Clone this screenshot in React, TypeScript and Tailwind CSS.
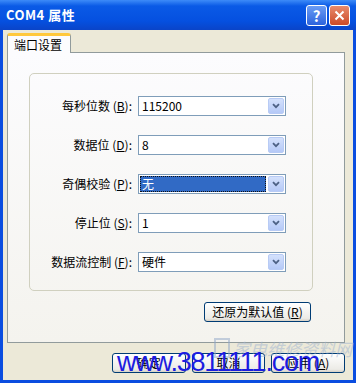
import React from "react";

const font = { fontFamily: '"Noto Sans CJK SC", "DejaVu Sans", sans-serif' };

// chevron do combo estilo XP
function Chevron() {
  return (
    <svg width="8" height="6" viewBox="0 0 8 6">
      <path d="M1 1.2 L4 4.2 L7 1.2" fill="none" stroke="#4d6185" strokeWidth="1.8" />
    </svg>
  );
}

function Combo({ value, selected }: { value: string; selected?: boolean }) {
  return (
    <div className="w-[148px] h-[20px] border border-[#7f9db9] bg-white flex items-center p-[1px]">
      <div className="flex-1 h-full flex items-center pr-[2px]">
        {selected ? (
          <div className="w-full h-full bg-[#316ac5] text-white border border-dotted border-[#111] flex items-center pl-[1px] text-[12px] leading-none">
            {value}
          </div>
        ) : (
          <span className="pl-[2px] text-[12px] leading-none text-black">{value}</span>
        )}
      </div>
      <div className="w-[16px] h-[16px] rounded-[2px] border border-[#b8cbf5] bg-[linear-gradient(to_bottom,#d4e1fc,#b5c9f7)] flex items-center justify-center">
        <Chevron />
      </div>
    </div>
  );
}

function Label({ text, k }: { text: string; k: string }) {
  return (
    <div className="w-[102px] text-right text-[12px] leading-none text-black whitespace-nowrap">
      {text} (<span className="underline">{k}</span>):
    </div>
  );
}

const rows = [
  { label: "每秒位数", k: "B", value: "115200" },
  { label: "数据位", k: "D", value: "8" },
  { label: "奇偶校验", k: "P", value: "无", selected: true },
  { label: "停止位", k: "S", value: "1" },
  { label: "数据流控制", k: "F", value: "硬件" },
];

function XpButton({ children, className = "" }: { children: React.ReactNode; className?: string }) {
  return (
    <div
      className={`h-[20px] rounded-[3px] border border-[#003c74] bg-[linear-gradient(to_bottom,#ffffff,#ecebe6_85%,#d6d0c5)] flex items-center justify-center text-[12px] leading-none text-black whitespace-nowrap ${className}`}
    >
      {children}
    </div>
  );
}

export default function App() {
  return (
    <div className="relative w-[356px] h-[383px] overflow-hidden bg-[#0a4de0] flex flex-col px-[3px] pb-[3px]" style={font}>
      {/* barra de título */}
      <div className="h-[30px] flex items-center justify-between pl-[3px] pr-[3px] bg-[linear-gradient(to_bottom,#3d8bf8,#0a5ae6_20%,#0550e0_70%,#0a44c8)] -mx-[3px]">
        <span className="text-white font-bold text-[13px] pl-[3px] tracking-[0.5px]">COM4 属性</span>
        <div className="flex gap-[2px] pr-[3px]">
          <div className="w-[21px] h-[21px] rounded-[3px] border border-white bg-[linear-gradient(to_bottom,#6a9cf4,#2c63dd)] flex items-center justify-center text-white font-bold text-[15px] leading-none">
            ?
          </div>
          <div className="w-[21px] h-[21px] rounded-[3px] border border-white bg-[linear-gradient(to_bottom,#e88a6c,#cc4a28)] flex items-center justify-center">
            <svg width="11" height="11" viewBox="0 0 11 11">
              <path d="M1.5 1.5 L9.5 9.5 M9.5 1.5 L1.5 9.5" stroke="white" strokeWidth="2" />
            </svg>
          </div>
        </div>
      </div>

      {/* corpo */}
      <div className="flex-1 bg-[#ece9d8] flex flex-col pl-[4px] pr-[8px] pt-[3px]">
        <div className="flex">
          <div className="relative z-10 w-[64px] h-[20px] -mb-[1px] bg-[#fcfcfe] border-x border-[#919b9c] border-t-[3px] border-t-[#ffc83c] rounded-t-[3px] flex items-center pl-[6px] text-[12px] leading-none text-black">
            端口设置
          </div>
        </div>
        <div className="h-[291px] border border-[#919b9c] bg-[linear-gradient(to_bottom,#fcfcfe,#f4f3ee)] flex flex-col pl-[21px] pt-[20px]">
          <div className="w-[284px] h-[218px] border border-[#d0d0bf] rounded-[5px] flex flex-col gap-[19px] pt-[22px]">
            {rows.map((r) => (
              <div key={r.k} className="flex items-center gap-[6px]">
                <Label text={r.label} k={r.k} />
                <Combo value={r.value} selected={r.selected} />
              </div>
            ))}
          </div>
          <div className="flex pl-[175px] pt-[11px]">
            <XpButton className="w-[107px]">
              还原为默认值 (<span className="underline">R</span>)
            </XpButton>
          </div>
        </div>
        <div className="flex gap-[6px] pl-[105px] pt-[10px]">
          <XpButton className="w-[74px]">确定</XpButton>
          <XpButton className="w-[74px]">取消</XpButton>
          <XpButton className="w-[74px]">
            应用 (<span className="underline">A</span>)
          </XpButton>
        </div>
      </div>

      {/* marca d'água */}
      <div className="absolute left-[214px] top-[338px] flex items-center gap-[3px] opacity-50 pointer-events-none whitespace-nowrap">
        <div className="w-[16px] h-[20px] border-2 border-[#8fa6c8]" />
        <span className="text-[17px] leading-none italic text-[#9db2d2]">家电维修资料网</span>
      </div>
      <div
        className="absolute left-[117px] top-[349px] text-[27px] leading-none text-[#1c1ce0] tracking-[-1.2px] pointer-events-none whitespace-nowrap"
        style={{ fontFamily: '"Liberation Sans", Arial, sans-serif' }}
      >
        www.3811111.com
      </div>
    </div>
  );
}
